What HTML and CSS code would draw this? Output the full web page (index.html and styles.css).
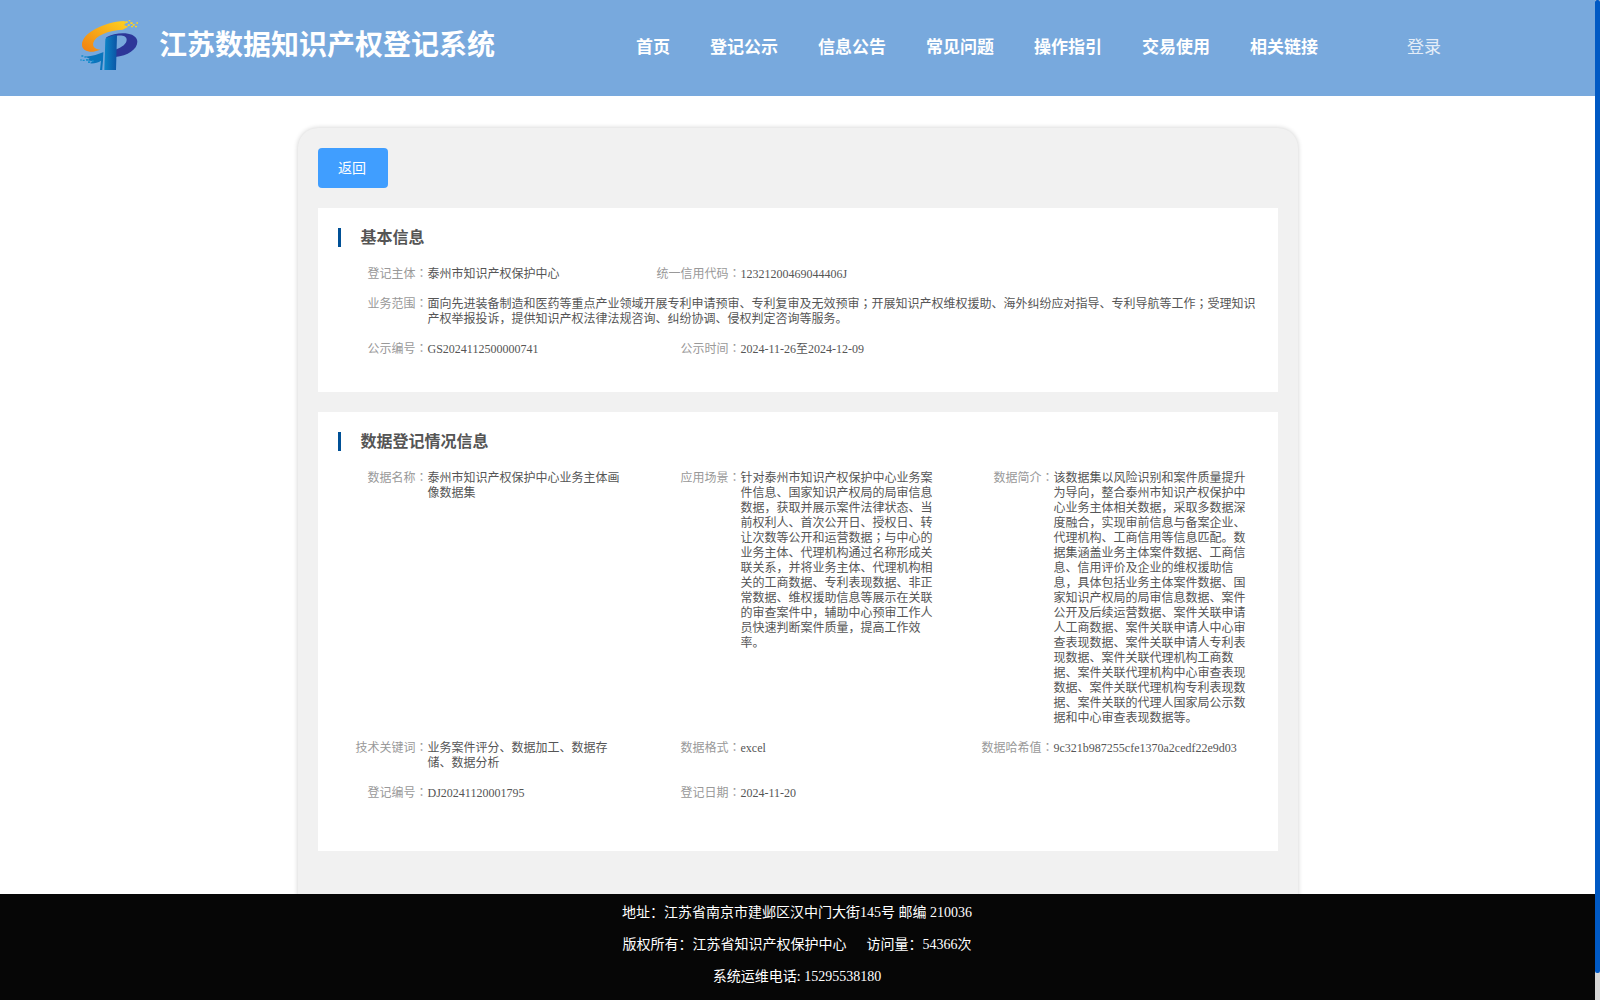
FILE: index.html
```html
<!DOCTYPE html>
<html lang="zh-CN">
<head>
<meta charset="utf-8">
<title>江苏数据知识产权登记系统</title>
<link rel="stylesheet" href="styles.css">
</head>
<body>
<div class="page">
  <header class="header">
    <svg class="logo" viewBox="0 0 240 210" width="80" height="70">
      <defs>
        <linearGradient id="gold" x1="0" y1="1" x2="1" y2="0"><stop offset="0" stop-color="#f07f12"/><stop offset="1" stop-color="#ffd21f"/></linearGradient>
        <linearGradient id="stem" x1="0" y1="0" x2="1" y2="0"><stop offset="0" stop-color="#0d86c8"/><stop offset="1" stop-color="#0b54a4"/></linearGradient>
      </defs>
      <path fill="url(#gold)" d="M163 33C100 36 36 70 36 104c0 15 14 22 34 21l22-6C74 118 67 109 70 98c6-20 40-36 88-39l17-9-13-5 6-6z"/>
      <path fill="#ffd21f" d="M166 34h7v5h-7zM176 30h5v4h-5zM181 37h7v5h-7zM173 43h6v5h-6zM188 42h6v5h-6zM199 37h5v4h-5zM195 48h6v4h-6zM183 48h6v4h-6z"/>
      <path fill="#2d3799" d="M109 82c19-11 44-14 65-11 18 3 28 12 28 24 0 23-29 42-66 46v-22c20-7 34-18 34-30 0-10-11-14-30-12l-31 9z"/>
      <path fill="url(#stem)" d="M106 86c9-7 20-10 35-12l-3 106h-35z"/>
      <path fill="#0b75bc" d="M46 140c22-2 40-7 55-14l-4 54h-7l3-28c-9 6-21 9-33 8l8-6-16-3 7-5z"/>
      <path fill="none" stroke="#78aadd" stroke-width="2" d="M104 86l-5 94"/>
      <path fill="#168fce" d="M34 136h6v4h-6zM43 139h6v4h-6zM48 147h6v5h-6zM38 149h6v4h-6zM31 148h4v4h-4zM54 154h7v5h-7zM65 151h6v5h-6z"/>
    </svg>
    <h1 class="site-title">江苏数据知识产权登记系统</h1>
    <nav class="nav">
      <a>首页</a><a>登记公示</a><a>信息公告</a><a>常见问题</a><a>操作指引</a><a>交易使用</a><a>相关链接</a>
    </nav>
    <a class="login">登录</a>
  </header>

  <main class="main">
    <div class="card">
      <button class="back">返回</button>
      <section class="panel basic">
        <h2 class="panel-title">基本信息</h2>
        <div class="fields">
          <div class="field"><span class="label">登记主体<i lang="zh-TW">：</i></span><span class="value">泰州市知识产权保护中心</span></div>
          <div class="field"><span class="label">统一信用代码<i lang="zh-TW">：</i></span><span class="value">12321200469044406J</span></div>
          <div class="field wide"><span class="label">业务范围<i lang="zh-TW">：</i></span><span class="value">面向先进装备制造和医药等重点产业领域开展专利申请预审、专利复审及无效预审<i lang="zh-TW">；</i>开展知识产权维权援助、海外纠纷应对指导、专利导航等工作<i lang="zh-TW">；</i>受理知识产权举报投诉，提供知识产权法律法规咨询、纠纷协调、侵权判定咨询等服务。</span></div>
          <div class="field"><span class="label">公示编号<i lang="zh-TW">：</i></span><span class="value">GS2024112500000741</span></div>
          <div class="field"><span class="label">公示时间<i lang="zh-TW">：</i></span><span class="value">2024-11-26至2024-12-09</span></div>
        </div>
      </section>
      <section class="panel data">
        <h2 class="panel-title">数据登记情况信息</h2>
        <div class="fields">
          <div class="field"><span class="label">数据名称<i lang="zh-TW">：</i></span><span class="value">泰州市知识产权保护中心业务主体画像数据集</span></div>
          <div class="field"><span class="label">应用场景<i lang="zh-TW">：</i></span><span class="value">针对泰州市知识产权保护中心业务案件信息、国家知识产权局的局审信息数据，获取并展示案件法律状态、当前权利人、首次公开日、授权日、转让次数等公开和运营数据<i lang="zh-TW">；</i>与中心的业务主体、代理机构通过名称形成关联关系，并将业务主体、代理机构相关的工商数据、专利表现数据、非正常数据、维权援助信息等展示在关联的审查案件中，辅助中心预审工作人员快速判断案件质量，提高工作效率。</span></div>
          <div class="field"><span class="label">数据简介<i lang="zh-TW">：</i></span><span class="value">该数据集以风险识别和案件质量提升为导向，整合泰州市知识产权保护中心业务主体相关数据，采取多数据深度融合，实现审前信息与备案企业、代理机构、工商信用等信息匹配。数据集涵盖业务主体案件数据、工商信息、信用评价及企业的维权援助信息，具体包括业务主体案件数据、国家知识产权局的局审信息数据、案件公开及后续运营数据、案件关联申请人工商数据、案件关联申请人中心审查表现数据、案件关联申请人专利表现数据、案件关联代理机构工商数据、案件关联代理机构中心审查表现数据、案件关联代理机构专利表现数据、案件关联的代理人国家局公示数据和中心审查表现数据等。</span></div>
          <div class="field"><span class="label">技术关键词<i lang="zh-TW">：</i></span><span class="value">业务案件评分、数据加工、数据存储、数据分析</span></div>
          <div class="field"><span class="label">数据格式<i lang="zh-TW">：</i></span><span class="value">excel</span></div>
          <div class="field"><span class="label">数据哈希值<i lang="zh-TW">：</i></span><span class="value">9c321b987255cfe1370a2cedf22e9d03</span></div>
          <div class="field"><span class="label">登记编号<i lang="zh-TW">：</i></span><span class="value">DJ20241120001795</span></div>
          <div class="field"><span class="label">登记日期<i lang="zh-TW">：</i></span><span class="value">2024-11-20</span></div>
        </div>
      </section>
    </div>
  </main>

  <footer class="footer">
    <p>地址：江苏省南京市建邺区汉中门大街145号 邮编 210036</p>
    <p>版权所有：江苏省知识产权保护中心<span class="visits">访问量：54366次</span></p>
    <p>系统运维电话: 15295538180</p>
  </footer>
</div>
<div class="scrollbar"><div class="thumb"></div></div>
</body>
</html>
```
FILE: styles.css
```css
* { box-sizing: border-box; }

body {
  margin: 0;
  height: 1000px;
  display: flex;
  overflow: hidden;
  background: #fff;
  font-family: "Liberation Serif", "Noto Sans CJK SC", serif;
}

h1, h2, p { margin: 0; }

.page {
  flex: 1;
  min-width: 0;
  display: flex;
  flex-direction: column;
}

.header {
  flex: none;
  height: 96px;
  display: flex;
  align-items: flex-start;
  padding: 10px 0 0 70px;
  background: #78a9dd;
  color: #fff;
  white-space: nowrap;
}

.logo { flex: none; }

.site-title {
  width: 476px;
  padding-left: 9px;
  margin-top: 16px;
  font-size: 28px;
  line-height: 40px;
  font-weight: bold;
}

.nav {
  display: flex;
  gap: 40px;
  margin: 25px 0 0 10px;
  font-size: 17px;
  line-height: 26px;
  font-weight: bold;
}

.login {
  margin: 25px 0 0 89px;
  font-size: 17px;
  line-height: 26px;
  opacity: 0.8;
}

.main {
  flex: 1;
  min-height: 0;
  overflow: hidden;
  padding-top: 32px;
}

.card {
  width: 1000px;
  height: 900px;
  margin: 0 auto;
  padding: 20px;
  border-radius: 20px;
  background: #f1f1f1;
  box-shadow: 0 0 5px rgba(0, 0, 0, 0.2);
}

.back {
  display: block;
  width: 70px;
  height: 40px;
  padding: 1px 1px 0 0;
  border: 0;
  border-radius: 4px;
  background: #409eff;
  color: #fff;
  font: 14px/39px "Liberation Serif", "Noto Sans CJK SC", serif;
  text-align: center;
}

.panel {
  margin-top: 20px;
  padding: 20px 0 0 20px;
  background: #fff;
}

.basic { height: 184px; }
.data { height: 439px; }

.panel-title {
  height: 19px;
  padding-left: 20px;
  border-left: 3px solid #005096;
  color: #555;
  font-size: 16px;
  line-height: 20px;
}

.fields {
  display: grid;
  grid-template-columns: repeat(3, 313px);
  row-gap: 15px;
  margin-top: 20px;
  font-size: 12px;
  line-height: 15px;
}

.field { display: flex; }
.field.wide { grid-column: 1 / -1; }

.label {
  flex: none;
  width: 90px;
  color: #999;
  text-align: right;
  white-space: nowrap;
}

.value {
  width: 195px;
  color: #555;
}

.wide .value { width: 832px; }

/* Centred full-width colons and semicolons */
i {
  font-family: "Noto Sans CJK TC", sans-serif;
  font-style: normal;
  line-height: 0;
}

.footer {
  flex: none;
  height: 106px;
  padding: 3px 1px 0 0;
  background: #060606;
  color: #fff;
  font-size: 14px;
  line-height: 32px;
  text-align: center;
}

.visits { margin-left: 20px; }

.scrollbar {
  flex: none;
  width: 5px;
  background: #d6d6d6;
}

.thumb {
  height: 973px;
  border-radius: 2px;
  background: #0059c4;
}
```
